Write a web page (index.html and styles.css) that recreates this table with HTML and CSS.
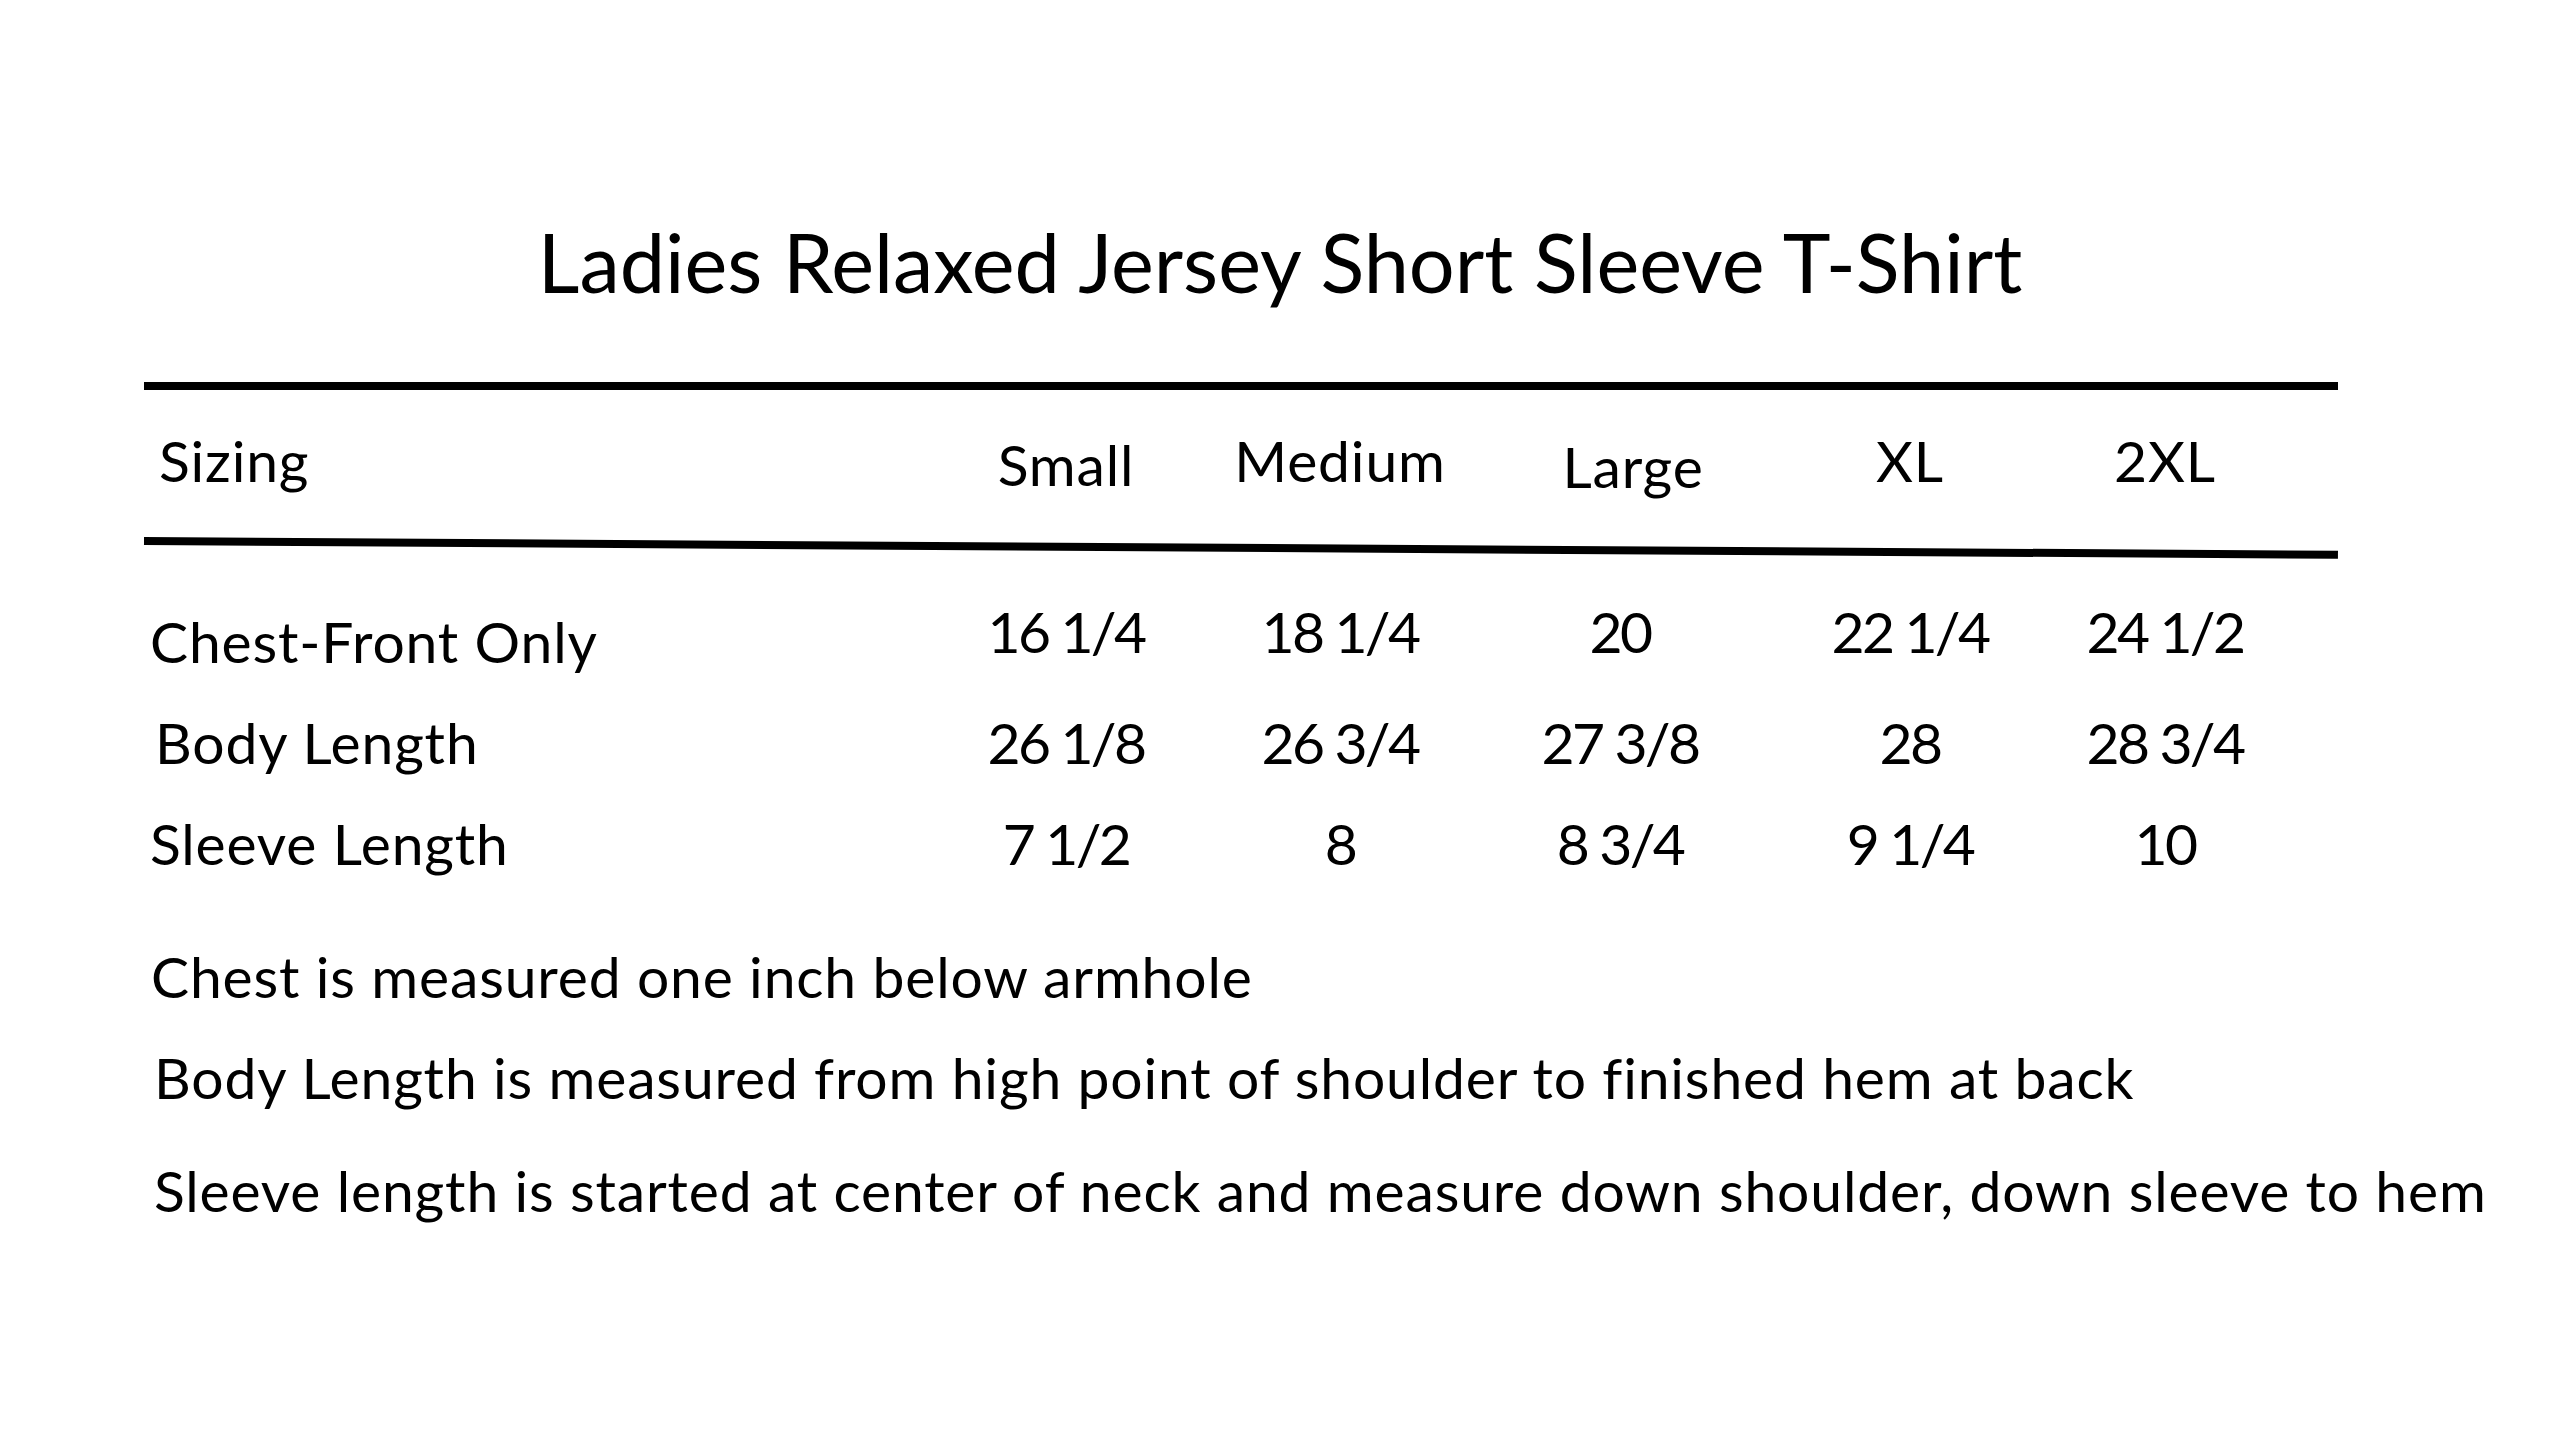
FILE: index.html
```html
<!DOCTYPE html>
<html lang="en">
<head>
<meta charset="utf-8">
<title>Ladies Relaxed Jersey Short Sleeve T-Shirt</title>
<link rel="stylesheet" href="styles.css">
</head>
<body>
<main class="sheet">
  <h1 class="title">Ladies Relaxed Jersey Short Sleeve T-Shirt</h1>
  <section class="chart">
    <div class="rule"></div>
    <div class="grid head">
      <div class="label lbl-sizing">Sizing</div>
      <div class="cell h-small">Small</div>
      <div class="cell">Medium</div>
      <div class="cell h-large">Large</div>
      <div class="cell">XL</div>
      <div class="cell">2XL</div>
    </div>
    <div class="rule rule-tilt"></div>
    <div class="grid rows">
      <div class="label">Chest-Front Only</div>
      <div class="cell num raised">16 1/4</div>
      <div class="cell num raised">18 1/4</div>
      <div class="cell num raised">20</div>
      <div class="cell num raised">22 1/4</div>
      <div class="cell num raised">24 1/2</div>

      <div class="label lbl-body">Body Length</div>
      <div class="cell num">26 1/8</div>
      <div class="cell num">26 3/4</div>
      <div class="cell num">27 3/8</div>
      <div class="cell num">28</div>
      <div class="cell num">28 3/4</div>

      <div class="label">Sleeve Length</div>
      <div class="cell num">7 1/2</div>
      <div class="cell num">8</div>
      <div class="cell num">8 3/4</div>
      <div class="cell num">9 1/4</div>
      <div class="cell num">10</div>
    </div>
  </section>
  <section class="notes">
    <p class="note n1">Chest is measured one inch below armhole</p>
    <p class="note n2">Body Length is measured from high point of shoulder to finished hem at back</p>
    <p class="note n3">Sleeve length is started at center of neck and measure down shoulder, down sleeve to hem</p>
  </section>
</main>
</body>
</html>
```
FILE: styles.css
```css
html, body {
  margin: 0;
  padding: 0;
  background: #ffffff;
}

body {
  width: 2560px;
  height: 1440px;
  overflow: hidden;
  color: #000000;
  font-family: Lato, "Liberation Sans", sans-serif;
  font-variant-ligatures: none;
}

.sheet {
  display: flex;
  flex-direction: column;
}

.title {
  margin: 221px 0 0;
  font-size: 81px;
  line-height: 81px;
  font-weight: 400;
  text-align: center;
}

.chart {
  margin: 80px 0 0 144px;
  width: 2194px;
}

.rule {
  height: 8px;
  background: #000000;
}

.rule-tilt {
  margin-top: 49px;
  transform: rotate(0.36deg);
  transform-origin: 0 50%;
}

.grid {
  display: grid;
  grid-template-columns: 785px 274px 274px 286px 294px 216px;
  font-size: 57px;
  line-height: 56px;
  letter-spacing: 0.85px;
  align-items: start;
}

.head {
  margin-top: 42px;
  grid-template-rows: 56px;
}

.rows {
  margin-top: 68px;
  grid-auto-rows: 56px;
  row-gap: 45px;
}

.label {
  padding-left: 6px;
  white-space: nowrap;
}

.lbl-sizing {
  padding-left: 15px;
}

.lbl-body {
  padding-left: 11px;
}

.cell {
  text-align: center;
  white-space: nowrap;
}

.num {
  letter-spacing: -2.6px;
}

.h-small {
  padding-top: 4px;
}

.h-large {
  padding-top: 6px;
  padding-left: 26px;
}

.raised {
  margin-top: -10px;
}

.notes {
  margin: 77px 0 0 144px;
}

.note {
  margin: 0;
  padding-left: 10px;
  font-size: 57px;
  line-height: 56px;
  letter-spacing: 0.85px;
  white-space: nowrap;
}

.n1 {
  padding-left: 7px;
}

.n2 {
  margin-top: 45px;
}

.n3 {
  margin-top: 57px;
}
```
